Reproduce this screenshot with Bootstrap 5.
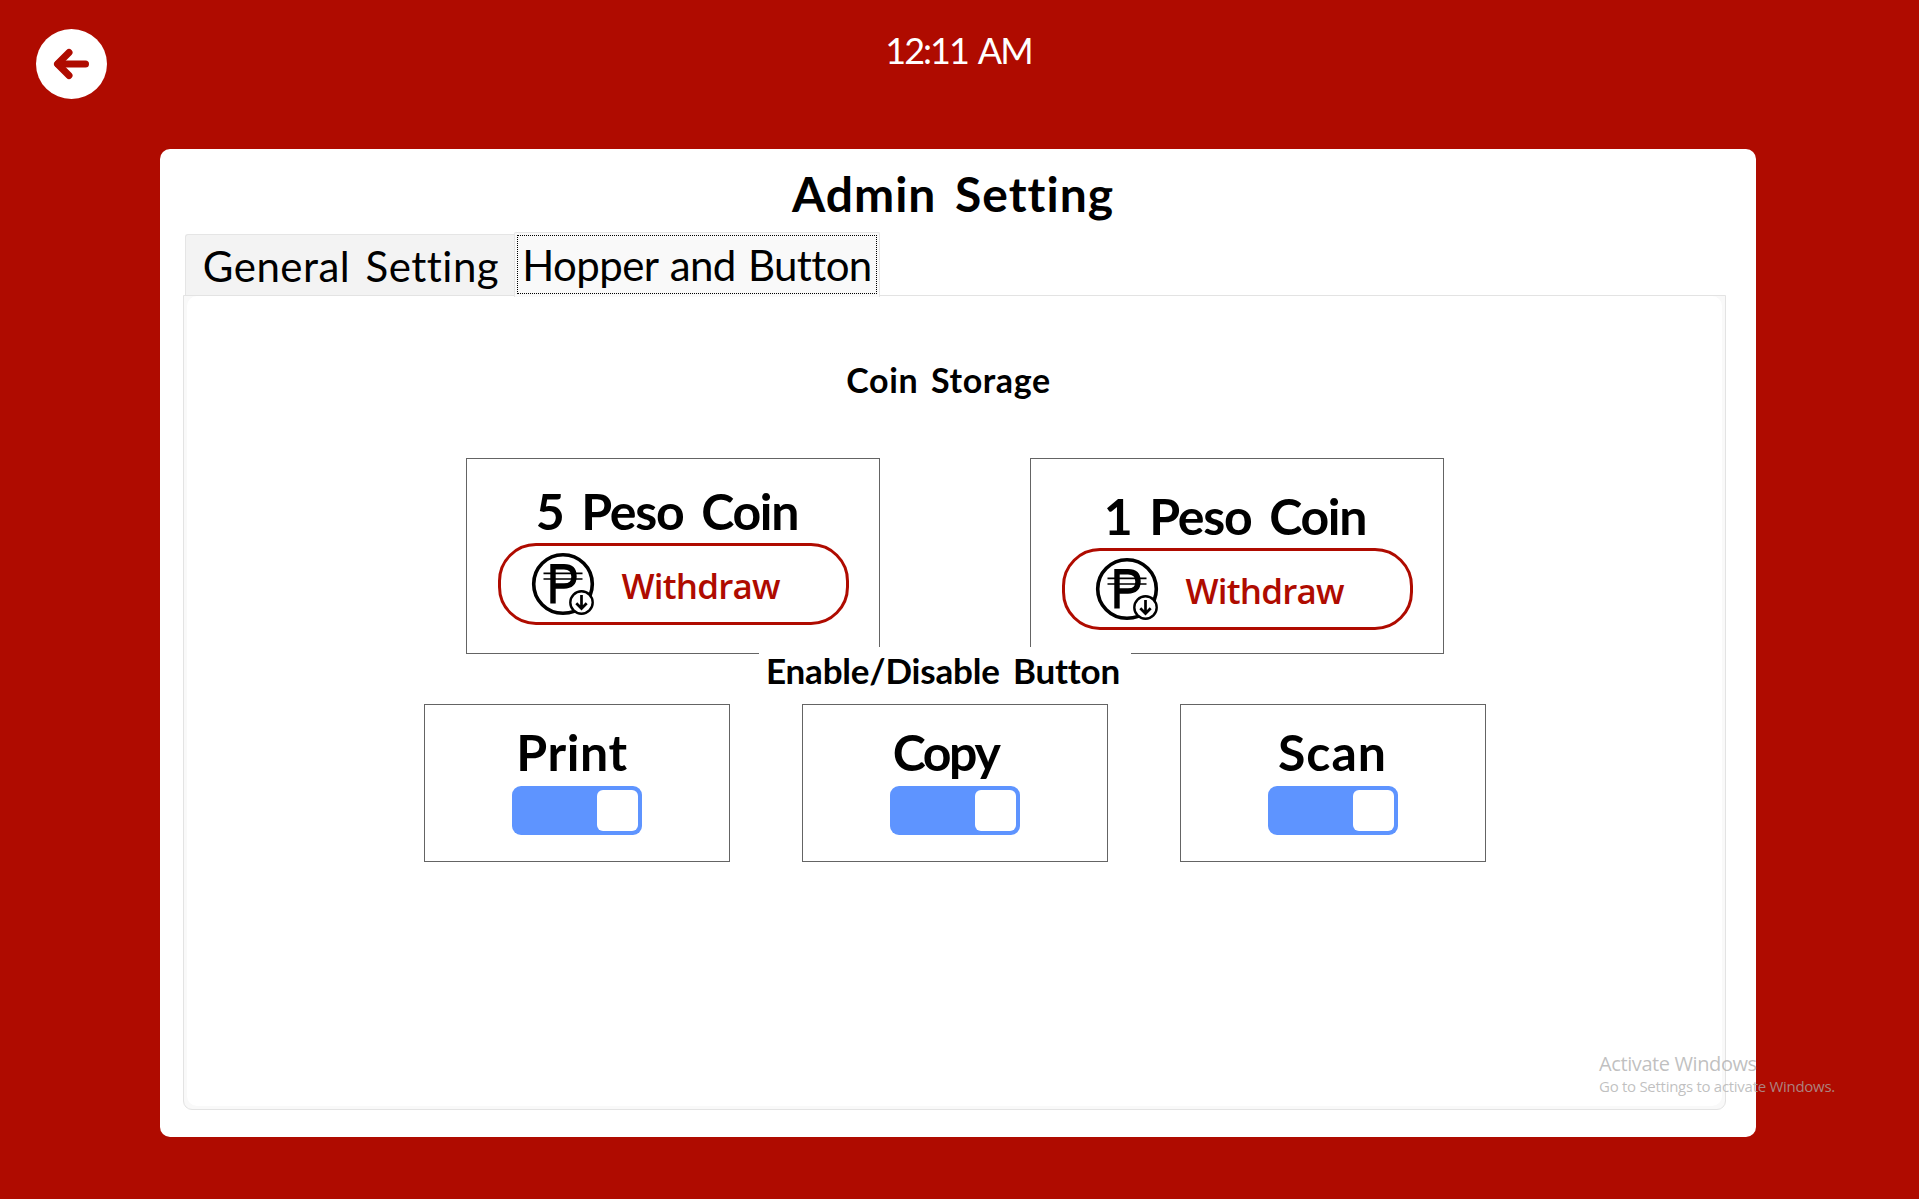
<!DOCTYPE html>
<html lang="en">
<head>
<meta charset="utf-8">
<meta name="viewport" content="width=device-width, initial-scale=1">
<title>Admin Setting</title>
<link href="https://cdn.jsdelivr.net/npm/bootstrap@5.3.0/dist/css/bootstrap.min.css" rel="stylesheet">
<style>
  body { background: #af0b00; color: #000; font-family: Lato, "Open Sans", sans-serif; height: 1199px; overflow: hidden; }
  h1, h2, h3, .clock, .kiosk-tab { white-space: nowrap; margin: 0; }

  .topbar { height: 149px; padding: 24px 0 0 36px; }
  .back-btn { width: 71px; height: 70px; margin-top: 5px; background: #fff; }
  .clock { font-size: 36px; line-height: 52px; letter-spacing: -2px; word-spacing: 4px; color: #fff; padding-right: 109px; }

  .panel { width: 1596px; height: 988px; margin-left: 160px; border-radius: 10px; padding: 15px 30px 0 23px; }
  .panel-title { font-size: 48px; line-height: 60px; font-weight: 700; letter-spacing: 1px; word-spacing: 6px; padding-right: 3px; }

  .kiosk-tabs { height: 63px; margin: 8px 0 0 2px; position: relative; z-index: 1; }
  .kiosk-tab { border: 1px solid #e5e5e5; border-bottom: 0; font-size: 42px; color: #000; }
  .tab-general { width: 329px; height: 61px; line-height: 62px; letter-spacing: .5px; word-spacing: 4px; padding-left: 2px; background: #f3f3f3; border-right: 0; border-top-left-radius: 3px; }
  .tab-hopper { width: 366px; height: 65px; margin-bottom: -2px; padding: 2px; line-height: 60px; letter-spacing: -.6px; word-spacing: 2px; background: #f9f9f9; border-radius: 2px 2px 0 0; }
  .focus-dots { height: 59px; outline: 1px dotted #000; outline-offset: -1px; }

  .pane { width: 1543px; height: 815px; border: 1px solid #e3e3e3; border-radius: 0 0 9px 9px; background: #f9f9f9; padding: 0 3px 3px; }
  .pane-inner { background: #fff; border-radius: 10px; padding-top: 62px; }

  .section-title { font-size: 34px; line-height: 44px; font-weight: 700; letter-spacing: .6px; word-spacing: 4px; margin-bottom: 56px; padding-right: 12px; }
  .coin-row { gap: 150px; }
  .coin-card { width: 414px; height: 196px; border: 1px solid #646464; padding: 21px 0 0 1px; }
  .coin-card.lower { padding-top: 26px; }
  .card-name { font-size: 50px; line-height: 64px; font-weight: 700; }
  .coin-card .card-name { line-height: 62px; letter-spacing: -1.3px; word-spacing: 7px; margin-bottom: 1px; padding-right: 12px; }
  .coin-card.lower .card-name { padding-right: 4px; }
  .withdraw-btn, .withdraw-btn:hover { width: 351px; height: 82px; border: 3px solid #af0b00; border-radius: 38px; background: #fff; color: #af0b00; font: 600 35px/50px "Open Sans", sans-serif; letter-spacing: -.8px; padding: 0 0 0 30px; }
  .withdraw-btn svg { margin-right: 27px; }
  .withdraw-btn span { padding-top: 4px; }

  .enable-title { width: 372px; height: 50px; font-size: 35px; line-height: 46px; font-weight: 700; letter-spacing: -.2px; word-spacing: 5px; background: #fff; margin: -7px 20px 7px 0; position: relative; padding-right: 3px; }
  .toggle-row { gap: 72px; }
  .toggle-card { width: 306px; height: 158px; border: 1px solid #646464; padding-top: 15px; }
  .toggle-card .card-name { margin-bottom: 2px; }
  .name-print { letter-spacing: .6px; padding-right: 9px; }
  .name-copy { letter-spacing: -2.4px; padding-right: 18px; }
  .name-scan { letter-spacing: 1px; }
  .switch { width: 130px; height: 49px; border-radius: 9px; background: #5e94ff; padding: 4px; }
  .switch-knob { width: 41px; height: 41px; border-radius: 6px; background: #fff; }

  .watermark { left: 1599px; top: 1051px; font-family: "Open Sans", sans-serif; color: rgba(172,172,172,.75); white-space: nowrap; z-index: 5; pointer-events: none; }
  .wm-big { font-size: 20px; line-height: 26px; letter-spacing: -.4px; }
  .wm-small { font-size: 15px; line-height: 19px; letter-spacing: -.28px; }
</style>
</head>
<body>
  <svg width="0" height="0" class="position-absolute" aria-hidden="true">
    <symbol id="peso" viewBox="0 0 64 64">
      <circle cx="32" cy="32" r="29.3" fill="none" stroke="#000" stroke-width="3.6"/>
      <path d="M22 12v39.5M20 14.8h13q10 0 10 9.6t-10 9.6H22" fill="none" stroke="#000" stroke-width="5.4"/>
      <path d="M12.5 21.3h39M12.5 27h39" stroke="#000" stroke-width="1.7"/>
      <circle cx="50.5" cy="50.5" r="11.2" fill="#fff" stroke="#000" stroke-width="2.4"/>
      <path d="M50.5 43v13.5M45.3 51.3l5.2 5.2 5.2-5.2" fill="none" stroke="#000" stroke-width="2.7"/>
    </symbol>
  </svg>

  <header class="topbar d-flex align-items-start">
    <button class="back-btn btn rounded-circle border-0 p-0 d-flex align-items-center justify-content-center flex-shrink-0" aria-label="Back">
      <svg width="71" height="70" viewBox="0 0 71 70"><path d="M22 35h27.5" fill="none" stroke="#af0b00" stroke-width="7" stroke-linecap="round"/><path d="M33 23.5 21.5 35 33 46.5" fill="none" stroke="#af0b00" stroke-width="7" stroke-linecap="round" stroke-linejoin="round"/></svg>
    </button>
    <div class="clock flex-grow-1 text-center">12:11 AM</div>
  </header>

  <main class="panel bg-white">
    <h1 class="panel-title text-center">Admin Setting</h1>
    <div class="kiosk-tabs d-flex align-items-end">
      <div class="kiosk-tab tab-general text-center">General Setting</div>
      <div class="kiosk-tab tab-hopper text-center"><div class="focus-dots">Hopper and Button</div></div>
    </div>
    <div class="pane">
      <div class="pane-inner h-100 d-flex flex-column align-items-center">
        <h2 class="section-title">Coin Storage</h2>
        <div class="coin-row d-flex">
          <section class="coin-card d-flex flex-column align-items-center">
            <h3 class="card-name">5 Peso Coin</h3>
            <button class="withdraw-btn btn d-flex align-items-center"><svg width="64" height="64"><use href="#peso"/></svg><span>Withdraw</span></button>
          </section>
          <section class="coin-card lower d-flex flex-column align-items-center">
            <h3 class="card-name">1 Peso Coin</h3>
            <button class="withdraw-btn btn d-flex align-items-center"><svg width="64" height="64"><use href="#peso"/></svg><span>Withdraw</span></button>
          </section>
        </div>
        <h2 class="enable-title text-center">Enable/Disable Button</h2>
        <div class="toggle-row d-flex">
          <section class="toggle-card d-flex flex-column align-items-center">
            <h3 class="card-name name-print">Print</h3>
            <div class="switch d-flex justify-content-end"><div class="switch-knob"></div></div>
          </section>
          <section class="toggle-card d-flex flex-column align-items-center">
            <h3 class="card-name name-copy">Copy</h3>
            <div class="switch d-flex justify-content-end"><div class="switch-knob"></div></div>
          </section>
          <section class="toggle-card d-flex flex-column align-items-center">
            <h3 class="card-name name-scan">Scan</h3>
            <div class="switch d-flex justify-content-end"><div class="switch-knob"></div></div>
          </section>
        </div>
      </div>
    </div>
  </main>

  <div class="watermark position-absolute">
    <div class="wm-big">Activate Windows</div>
    <div class="wm-small">Go to Settings to activate Windows.</div>
  </div>
<script src="https://cdn.jsdelivr.net/npm/bootstrap@5.3.0/dist/js/bootstrap.bundle.min.js"></script>
</body>
</html>
